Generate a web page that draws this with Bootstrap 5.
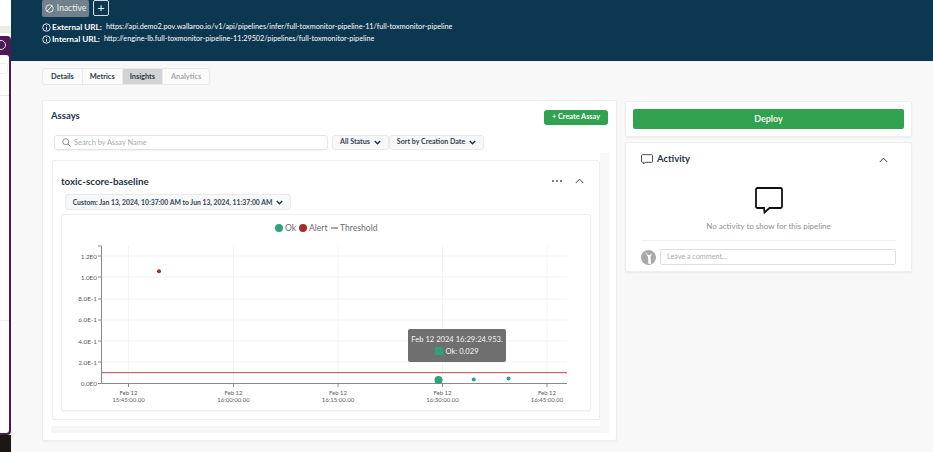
<!DOCTYPE html>
<html lang="en">
<head>
    <meta charset="UTF-8">
    <meta name="viewport" content="width=device-width, initial-scale=1.0">
    <title>Pipeline Insights</title>
    <link href="https://cdn.jsdelivr.net/npm/bootstrap@5.3.0/dist/css/bootstrap.min.css" rel="stylesheet">
    <style>
        html, body { height: 452px; overflow: hidden; }
        body { font-family: "Lato", "Open Sans", sans-serif; background: #f8f8f8; color: #1f3446; }

        /* other window peeking in at the left edge */
        .side-win { width: 11px; flex: none; background: #fff; overflow: hidden; }
        .side-top { height: 36px; background: #fff; padding-top: 26px; }
        .side-top div { height: 7px; background: #eeece6; }
        .side-purple { height: 399px; background: #4a1a55; border-radius: 0 4px 4px 0; padding: 4px 2px 2px 0; }
        .side-inner { height: 378px; margin-top: 5px; background: #fff; border-radius: 0 3px 3px 0; padding-top: 8px; }
        .side-input { height: 11px; width: 8px; border: 1px solid #eee; border-left: 0; border-radius: 0 3px 3px 0; }
        .side-line { border-top: 1px solid #e6e6e6; margin-top: 21px; }
        .side-line2 { border-top: 1px solid #eee; margin-top: 224px; }
        .side-dark { height: 17px; background: #1b1712; }
        .side-help { width: 10px; height: 10px; margin-left: -4px; border: 1px solid #e8dfea; border-radius: 50%; }

        .page-main { width: 922px; flex: none; }
        .hero { height: 61px; background: #0b3750; color: #fff; padding-left: 31px; }
        .state-row { height: 15px; gap: 4px; margin-bottom: 6px; }
        .state-pill { width: 47px; height: 17px; background: #71808b; border-radius: 2px; font-size: 8.5px; gap: 3px; color: #eef1f3; flex: none; }
        .plus-btn { width: 16px; height: 16px; border: 1px solid #d5dde2; border-radius: 2px; font-size: 12px; line-height: 1; }
        .url-row { height: 12px; font-size: 7.25px; gap: 1px; white-space: nowrap; }
        .url-row b { font-size: 8.2px; margin-right: 3px; }

        .body-wrap { padding: 7px 21px 0 31px; gap: 8px; }
        .tab-group { width: 168px; height: 17px; margin-bottom: 15px; border: 1px solid #e8e9ea; border-radius: 3px; background: #fbfbfb; font-size: 7.4px; overflow: hidden; }
        .tab-item { width: 40px; display: flex; align-items: center; justify-content: center; border-right: 1px solid #e8e9ea; color: #2c3c49; font-weight: 700; }
        .tab-item.now { background: #d3d3d3; width: 41px; }
        .tab-item.off { color: #a2a8ad; border: 0; width: 46px; }

        .panel-card { background: #fff; border: 1px solid #eeeeee; border-radius: 2px; box-shadow: 0 1px 2px rgba(0,0,0,.05); }
        .assay-panel { width: 575px; height: 341px; padding: 8px; }
        .assay-title { font-size: 9.5px; font-weight: 700; line-height: 1; margin-top: 2px; }
        .create-btn { display: block; width: 64px; height: 15px; margin-top: 1px; background: #31a24f; color: #fff; border: 0; border-radius: 3px; font-size: 7.3px; font-weight: 700; padding: 0; }
        .filter-row { margin: 10px 0 3px 3px; gap: 4px; height: 15px; }
        .search-box { width: 274px; border: 1px solid #e3e4e5; border-radius: 3px; font-size: 7.4px; color: #a7adb2; padding-left: 7px; gap: 3px; box-shadow: 0 1px 2px rgba(0,0,0,.06); }
        .pick-btn { height: 15px; border: 1px solid #e9eaeb; background: #f7f8f9; border-radius: 3px; font-size: 7.1px; font-weight: 700; color: #34434f; padding: 0 7px; gap: 4px; white-space: nowrap; }
        .pick-btn svg { flex: none; }

        .assay-scroll { height: 280px; width: 558px; padding-top: 7px; border-right: 9px solid #f8f8f8; }
        .assay-card { height: 260px; width: 548px; margin-left: 1px; border: 1px solid #eeeeee; border-radius: 2px; background: #fff; padding: 0 8px; }
        .next-peek { height: 7px; margin-top: 6px; background: #f5f5f5; }
        .assay-name { font-size: 9.8px; font-weight: 700; color: #1f3446; }
        .assay-head { height: 33px; padding-top: 7px; padding-right: 7px; }
        .dots { gap: 2px; margin-right: 13px; }
        .dots i { display: block; width: 2px; height: 2px; border-radius: 50%; background: #4a5965; }
        .date-btn { width: 226px; height: 16px; margin-left: 4px; justify-content: center; font-size: 6.8px; }

        .chart-box { position: relative; width: 530px; height: 197px; margin-top: 4px; border: 1px solid #eeeeee; border-radius: 2px; box-shadow: 0 1px 2px rgba(0,0,0,.05); }
        .chart-box svg { display: block; }
        .chart-box text { font-family: "Lato", sans-serif; }
        .tip-box { position: absolute; left: 346px; top: 114px; width: 98px; height: 33px; background: #6f6f6f; border-radius: 2px; color: #f4f4f4; font-size: 7.6px; line-height: 12px; text-align: center; padding-top: 4px; white-space: nowrap; }
        .tip-swatch { display: inline-block; width: 8px; height: 8px; background: #2fa27a; margin-right: 2px; vertical-align: -1px; }

        .right-col { width: 287px; padding-top: 32px; }
        .deploy-card { height: 36px; padding: 7px; margin-top: 1px; margin-bottom: 5px; }
        .deploy-btn { display: block; width: 100%; height: 20px; background: #31a24f; color: #f2f2f2; border: 0; border-radius: 2px; font-size: 9px; font-weight: 700; padding: 0; }
        .activity-card { height: 130px; padding: 0 15px; }
        .act-head { height: 33px; font-size: 9.5px; font-weight: 700; gap: 4px; padding-right: 8px; }
        .act-icon { margin: 11px 0 0; }
        .act-empty { font-size: 8px; color: #8b9298; line-height: 1; margin-top: 8px; }
        .act-foot { border-top: 1px solid #eeeeee; margin-top: 10px; padding-top: 8px; gap: 4px; }
        .avatar-dot { flex: none; display: block; }
        .comment-box { flex-grow: 1; height: 16px; border: 1px solid #dfdfdf; border-radius: 2px; font-size: 7.2px; color: #a7adb2; padding-left: 6px; }
    </style>
</head>
<body>
    <div class="d-flex">
        <div class="side-win">
            <div class="side-top"><div></div></div>
            <div class="side-purple">
                <div class="side-help"></div>
                <div class="side-inner">
                    <div class="side-input"></div>
                    <div class="side-line"></div>
                    <div class="side-line2"></div>
                </div>
            </div>
            <div class="side-dark"></div>
        </div>

        <div class="page-main">
            <div class="hero">
                <div class="state-row d-flex">
                    <div class="state-pill d-flex align-items-center justify-content-center">
                        <svg width="9" height="9" viewBox="0 0 12 12" fill="none" stroke="#eef1f3" stroke-width="1.2"><circle cx="6" cy="6" r="5"/><path d="M2.6 9.4 9.4 2.6"/></svg>
                        Inactive
                    </div>
                    <div class="plus-btn d-flex align-items-center justify-content-center">+</div>
                </div>
                <div class="url-row d-flex align-items-center">
                    <svg width="9" height="9" viewBox="0 0 12 12" fill="none" stroke="#fff" stroke-width="1.2"><circle cx="6" cy="6" r="5"/><path d="M6 5.4V9M6 3v1.2"/></svg>
                    <b>External URL:</b> https://api.demo2.pov.wallaroo.io/v1/api/pipelines/infer/full-toxmonitor-pipeline-11/full-toxmonitor-pipeline
                </div>
                <div class="url-row d-flex align-items-center">
                    <svg width="9" height="9" viewBox="0 0 12 12" fill="none" stroke="#fff" stroke-width="1.2"><circle cx="6" cy="6" r="5"/><path d="M6 5.4V9M6 3v1.2"/></svg>
                    <b>Internal URL:</b> http://engine-lb.full-toxmonitor-pipeline-11:29502/pipelines/full-toxmonitor-pipeline
                </div>
            </div>

            <div class="body-wrap d-flex">
                <div>
                    <div class="tab-group d-flex">
                        <div class="tab-item">Details</div>
                        <div class="tab-item">Metrics</div>
                        <div class="tab-item now">Insights</div>
                        <div class="tab-item off">Analytics</div>
                    </div>

                    <div class="panel-card assay-panel">
                        <div class="d-flex justify-content-between align-items-start">
                            <div class="assay-title">Assays</div>
                            <button class="create-btn">+ Create Assay</button>
                        </div>
                        <div class="filter-row d-flex">
                            <div class="search-box d-flex align-items-center">
                                <svg width="9" height="9" viewBox="0 0 12 12" fill="none" stroke="#7d858b" stroke-width="1.2"><circle cx="5" cy="5" r="4"/><path d="M8 8l3.4 3.4"/></svg>
                                Search by Assay Name
                            </div>
                            <div class="d-flex">
                                <div class="pick-btn d-flex align-items-center">All Status
                                    <svg width="7" height="5" viewBox="0 0 7 5" fill="none" stroke="#22303b" stroke-width="1.4"><path d="M.8 1 3.5 3.8 6.2 1"/></svg>
                                </div>
                                <div class="pick-btn d-flex align-items-center">Sort by Creation Date
                                    <svg width="7" height="5" viewBox="0 0 7 5" fill="none" stroke="#22303b" stroke-width="1.4"><path d="M.8 1 3.5 3.8 6.2 1"/></svg>
                                </div>
                            </div>
                        </div>

                        <div class="assay-scroll">
                            <div class="assay-card">
                                <div class="assay-head d-flex justify-content-between align-items-center">
                                    <div class="assay-name">toxic-score-baseline</div>
                                    <div class="d-flex align-items-center">
                                        <div class="dots d-flex"><i></i><i></i><i></i></div>
                                        <svg width="9" height="6" viewBox="0 0 9 6" fill="none" stroke="#33424e" stroke-width="1"><path d="M.8 5 4.5 1.2 8.2 5"/></svg>
                                    </div>
                                </div>
                                <div class="pick-btn date-btn d-flex align-items-center">Custom: Jan 13, 2024, 10:37:00 AM to Jun 13, 2024, 11:37:00 AM
                                    <svg width="7" height="5" viewBox="0 0 7 5" fill="none" stroke="#22303b" stroke-width="1.4"><path d="M.8 1 3.5 3.8 6.2 1"/></svg>
                                </div>
                                <div class="chart-box">
                                    <!-- svg origin is page (62,215) -->
                                    <svg width="528" height="195" viewBox="62 215 528 195">
                                        <g stroke="#f3f3f3" stroke-width="1" fill="none">
                                            <path d="M102 256H567M102 277H567M102 299H567M102 320H567M102 341H567M102 362H567"/>
                                            <path d="M128.5 246V383M233.5 246V383M338 246V383M442.5 246V383M547 246V383"/>
                                        </g>
                                        <g stroke="#8a8a8a" stroke-width="1" fill="none">
                                            <path d="M101.5 246V383.5H567"/>
                                            <path d="M98 246h3.5M98 256h3.5M98 277h3.5M98 299h3.5M98 320h3.5M98 341h3.5M98 362h3.5M98 383.5h3.5"/>
                                            <path d="M128.5 384v3M233.5 384v3M338 384v3M442.5 384v3M547 384v3"/>
                                        </g>
                                        <path d="M102 372.7H567" stroke="#b9474a" stroke-width="1" fill="none"/>
                                        <circle cx="159" cy="271.3" r="2" fill="#9e2f2a"/>
                                        <circle cx="438.5" cy="380" r="4" fill="#2fa27a"/>
                                        <circle cx="473.7" cy="379.5" r="2" fill="#2fa27a"/>
                                        <circle cx="508.5" cy="378.5" r="2" fill="#2fa27a"/>

                                        <g font-size="6.4" fill="#5c5c5c" text-anchor="end">
                                            <text x="97" y="258.5">1.2E0</text>
                                            <text x="97" y="279.5">1.0E0</text>
                                            <text x="97" y="301">8.0E-1</text>
                                            <text x="97" y="322">6.0E-1</text>
                                            <text x="97" y="343.5">4.0E-1</text>
                                            <text x="97" y="364.5">2.0E-1</text>
                                            <text x="97" y="385.5">0.0E0</text>
                                        </g>
                                        <g font-size="6" fill="#5c5c5c" text-anchor="middle">
                                            <text x="128.5" y="394.5">Feb 12</text><text x="128.5" y="401.5">15:45:00.00</text>
                                            <text x="233.5" y="394.5">Feb 12</text><text x="233.5" y="401.5">16:00:00.00</text>
                                            <text x="338" y="394.5">Feb 12</text><text x="338" y="401.5">16:15:00.00</text>
                                            <text x="442.5" y="394.5">Feb 12</text><text x="442.5" y="401.5">16:30:00.00</text>
                                            <text x="547" y="394.5">Feb 12</text><text x="547" y="401.5">16:45:00.00</text>
                                        </g>

                                        <circle cx="279" cy="228" r="4" fill="#2fa27a"/>
                                        <text x="285" y="231" font-size="8.6" fill="#6e6e6e">Ok</text>
                                        <circle cx="303" cy="228" r="4" fill="#9e2f2a"/>
                                        <text x="309" y="231" font-size="8.6" fill="#6e6e6e">Alert</text>
                                        <path d="M331 228h7" stroke="#b9777a" stroke-width="1.5" fill="none"/>
                                        <text x="340" y="231" font-size="8.6" fill="#6e6e6e">Threshold</text>
                                    </svg>
                                    <div class="tip-box">
                                        Feb 12 2024 16:29:24.953.<br>
                                        <span class="tip-swatch"></span>Ok: 0.029
                                    </div>
                                </div>
                            </div>
                            <div class="next-peek"></div>
                        </div>
                    </div>
                </div>

                <div class="right-col">
                    <div class="panel-card deploy-card">
                        <button class="deploy-btn">Deploy</button>
                    </div>
                    <div class="panel-card activity-card">
                        <div class="act-head d-flex align-items-center">
                            <svg width="12" height="11" viewBox="0 0 12 11" fill="none" stroke="#44525d" stroke-width="1"><path d="M1.5 .7h9a1 1 0 0 1 1 1v5.6a1 1 0 0 1-1 1H4L2.5 10V8.3h-1a1 1 0 0 1-1-1V1.7a1 1 0 0 1 1-1z"/></svg>
                            <span class="flex-grow-1">Activity</span>
                            <svg width="9" height="6" viewBox="0 0 9 6" fill="none" stroke="#33424e" stroke-width="1"><path d="M.8 5 4.5 1.2 8.2 5"/></svg>
                        </div>
                        <div class="text-center">
                            <svg class="act-icon d-block mx-auto" width="28" height="27" viewBox="0 0 28 27" fill="none" stroke="#111" stroke-width="1.8"><path d="M2.5 1h23a1.5 1.5 0 0 1 1.5 1.5v17a1.5 1.5 0 0 1-1.5 1.500H14.500L9.500 25.500 9 21H2.500A1.500 1.500 0 0 1 1 19.500v-17A1.500 1.500 0 0 1 2.500 1z"/></svg>
                            <div class="act-empty">No activity to show for this pipeline</div>
                        </div>
                        <div class="act-foot d-flex align-items-center">
                            <svg class="avatar-dot" width="15" height="15" viewBox="0 0 15 15"><circle cx="7.5" cy="7.5" r="7.5" fill="#a9a9a9"/><path d="M4 1.5 7 7 7.5 14 10 14 9.500 6.500 11.500 3 9 5 7 5z" fill="#fff"/></svg>
                            <div class="comment-box d-flex align-items-center">Leave a comment...</div>
                        </div>
                    </div>
                </div>
            </div>
        </div>
    </div>
    <script src="https://cdn.jsdelivr.net/npm/bootstrap@5.3.0/dist/js/bootstrap.bundle.min.js"></script>
</body>
</html>
